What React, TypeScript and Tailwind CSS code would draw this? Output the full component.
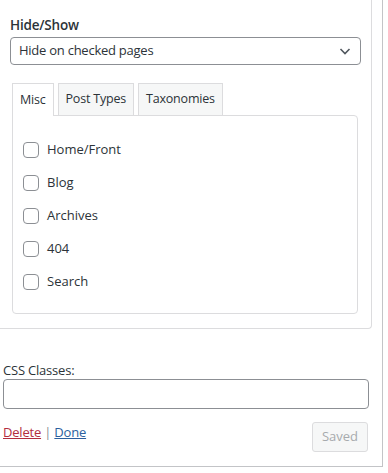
import React from 'react';

const font = { fontFamily: '"Open Sans", "Noto Sans", sans-serif' };

const miscItems = ['Home/Front', 'Blog', 'Archives', '404', 'Search'];

const Checkbox: React.FC<{ label: string }> = ({ label }) => (
    <label className="flex items-center h-[33px] gap-[8px]">
        <span className="w-[16px] h-[16px] rounded-[4px] border border-[#8c8f94] bg-white shrink-0"></span>
        <span className="text-[13px] text-[#2c3338]">{label}</span>
    </label>
);

const App: React.FC = () => {
    return (
        <div className="w-[383px] h-[467px] bg-white border-r border-b border-[#c3c4c7] text-[#2c3338]" style={font}>
            {/* Widget form */}
            <div className="w-[372px] h-[329px] border-r border-b border-[#dcdcde] rounded-br-[4px] pl-[10px] pt-[15px]">
                <div className="text-[13.5px] leading-[20px] font-semibold tracking-[-0.2px]">Hide/Show</div>
                <div className="mt-[2px] w-[351px] h-[28px] border border-[#8c8f94] rounded-[4px] flex items-center justify-between pl-[8px] pr-[8px]">
                    <span className="text-[13px] tracking-[-0.25px]">Hide on checked pages</span>
                    <svg width="14" height="14" viewBox="0 0 14 14" fill="none">
                        <polyline points="2.5,5 7,9.5 11.5,5" stroke="#50575e" strokeWidth="1.6" />
                    </svg>
                </div>

                {/* Tabs */}
                <div className="ml-[2px] mt-[18px] w-[346px]">
                    <div className="flex gap-[4px] h-[32px] relative z-10">
                        <div className="h-[33px] px-[7px] border border-b-0 border-[#dcdcde] bg-white text-[12.5px] tracking-[-0.2px] flex items-center">Misc</div>
                        <div className="h-[32px] px-[7px] border border-b-0 border-[#dcdcde] bg-[#f6f7f7] text-[12.5px] tracking-[-0.2px] flex items-center">Post Types</div>
                        <div className="h-[32px] px-[7px] border border-b-0 border-[#dcdcde] bg-[#f6f7f7] text-[12.5px] tracking-[-0.2px] flex items-center">Taxonomies</div>
                    </div>
                    <div className="h-[199px] border border-[#dcdcde] rounded-b-[4px] rounded-tr-[4px] pl-[10px] pt-[17px]">
                        {miscItems.map(item => (
                            <Checkbox key={item} label={item} />
                        ))}
                    </div>
                </div>
            </div>

            {/* CSS classes */}
            <div className="pl-[3px] pr-[14px] pt-[32px]">
                <div className="text-[13px] leading-[18px] tracking-[-0.2px]">CSS Classes:</div>
                <div className="w-[366px] h-[30px] border border-[#8c8f94] rounded-[4px] bg-white"></div>
                <div className="flex items-start justify-between mt-[13px]">
                    <div className="text-[13px] mt-[1px] tracking-[-0.2px]">
                        <a className="text-[#b32d3e] underline">Delete</a>
                        <span className="text-[#8c8f94]"> | </span>
                        <a className="text-[#2b5f9e] underline">Done</a>
                    </div>
                    <button className="w-[56px] h-[30px] rounded-[3px] border border-[#dcdcde] bg-[#f6f7f7] text-[#a7aaad] text-[13px]">Saved</button>
                </div>
            </div>
        </div>
    );
};

export default App;
